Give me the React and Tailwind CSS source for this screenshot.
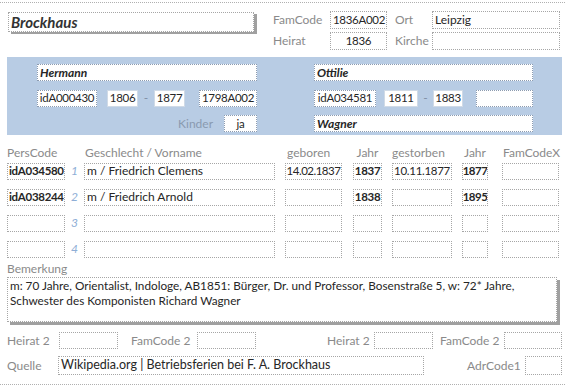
const FONT = { fontFamily: "Lato, 'Open Sans', sans-serif" };

function Box({ className = "", children }) {
  return (
    <div
      className={`h-[17px] shrink-0 border border-dotted border-[#a6a6a6] bg-white flex items-center px-[2px] text-[11.5px] tracking-[-0.3px] leading-none text-[#262626] whitespace-nowrap overflow-hidden ${className}`}
    >
      {children}
    </div>
  );
}

function PanelBox({ className = "", solid, children }) {
  return (
    <div
      className={`h-[17px] shrink-0 border bg-white flex items-center px-[2px] text-[11.5px] tracking-[-0.3px] leading-none text-[#262626] whitespace-nowrap overflow-hidden ${
        solid ? "border-solid border-[#d0dae6]" : "border-dotted border-[#8c9bb0]"
      } ${className}`}
    >
      {children}
    </div>
  );
}

function Label({ className = "", children }) {
  return (
    <div className={`shrink-0 text-[12px] leading-none text-[#8a8a8a] whitespace-nowrap ${className}`}>
      {children}
    </div>
  );
}

const rows = [
  { code: "idA034580", name: "m / Friedrich Clemens", geb: "14.02.1837", j1: "1837", gest: "10.11.1877", j2: "1877" },
  { code: "idA038244", name: "m / Friedrich Arnold", geb: "", j1: "1838", gest: "", j2: "1895" },
  { code: "", name: "", geb: "", j1: "", gest: "", j2: "" },
  { code: "", name: "", geb: "", j1: "", gest: "", j2: "" },
];

export default function App() {
  return (
    <div className="w-[570px] h-[390px] bg-white overflow-hidden" style={FONT}>
      {/* top rule */}
      <div className="mt-[2px] w-[565px] border-t border-dotted border-[#b0b0b0]" />

      {/* header */}
      <div className="h-[54px] flex items-start pt-[8px]">
        <div className="ml-[8px] mt-[1px] w-[246px] h-[20px] border border-dotted border-[#a6a6a6] bg-white shadow-[3px_2px_0_#a0a0a0] flex items-center px-[2px]">
          <span className="text-[15px] font-bold italic text-[#333]">Brockhaus</span>
        </div>
        <div className="ml-[19px] flex flex-col gap-[3px]">
          <div className="flex items-center h-[18px]">
            <Label className="w-[57px]">FamCode</Label>
            <Box className="w-[57px] !h-[18px]">1836A002</Box>
            <Label className="w-[37px] ml-[8px]">Ort</Label>
            <Box className="w-[128px] !h-[18px] !text-[12px] !tracking-normal">Leipzig</Box>
          </div>
          <div className="flex items-center h-[18px]">
            <Label className="w-[57px]">Heirat</Label>
            <Box className="w-[57px] !h-[18px] justify-center">1836</Box>
            <Label className="w-[37px] ml-[8px]">Kirche</Label>
            <Box className="w-[128px] !h-[18px]" />
          </div>
        </div>
      </div>

      {/* parents panel */}
      <div className="ml-[7px] w-[555px] h-[78px] bg-[#b8cce4] flex pt-[7px]">
        <div className="ml-[30px] w-[220px] flex flex-col gap-[8px]">
          <PanelBox className="w-full font-bold italic !text-[12px] !tracking-normal">Hermann</PanelBox>
          <div className="flex items-center">
            <PanelBox className="w-[60px] justify-center">idA000430</PanelBox>
            <PanelBox solid className="w-[31px] ml-[10px] justify-center">1806</PanelBox>
            <div className="w-[16px] text-center text-[12px] text-[#7f8fa6]">-</div>
            <PanelBox solid className="w-[31px] justify-center">1877</PanelBox>
            <PanelBox className="w-[58px] ml-[14px] justify-center">1798A002</PanelBox>
          </div>
          <div className="flex items-center justify-end">
            <Label className="text-[#8a9ab0]">Kinder</Label>
            <PanelBox className="w-[33px] ml-[11px] justify-center">ja</PanelBox>
          </div>
        </div>
        <div className="ml-[57px] w-[219px] flex flex-col gap-[8px]">
          <PanelBox className="w-full font-bold italic !text-[12px] !tracking-normal">Ottilie</PanelBox>
          <div className="flex items-center">
            <PanelBox className="w-[62px] justify-center">idA034581</PanelBox>
            <PanelBox solid className="w-[34px] ml-[8px] justify-center">1811</PanelBox>
            <div className="w-[15px] text-center text-[12px] text-[#7f8fa6]">-</div>
            <PanelBox solid className="w-[30px] justify-center">1883</PanelBox>
            <PanelBox className="w-[57px] ml-[13px]" />
          </div>
          <PanelBox className="w-full font-bold italic !text-[12px] !tracking-normal">Wagner</PanelBox>
        </div>
      </div>

      {/* children table */}
      <div className="ml-[7px] mt-[8px] flex items-center h-[19px]">
        <Label className="w-[58px]">PersCode</Label>
        <div className="w-[19px]" />
        <Label className="w-[191px] pl-[1px]">Geschlecht / Vorname</Label>
        <Label className="w-[57px] ml-[10px] pl-[2px]">geboren</Label>
        <Label className="w-[29px] ml-[11px] text-center">Jahr</Label>
        <Label className="w-[60px] ml-[10px]">gestorben</Label>
        <Label className="w-[26px] ml-[10px] text-center">Jahr</Label>
        <Label className="w-[57px] ml-[14px] pl-[1px]">FamCodeX</Label>
      </div>
      <div className="ml-[7px] flex flex-col gap-[8px]">
        {rows.map((r, i) => (
          <div key={i} className="flex items-center">
            <Box className="w-[58px] font-bold !px-[1px]">{r.code}</Box>
            <div className="w-[19px] text-center text-[12px] italic text-[#8eaed6]">{i + 1}</div>
            <Box className="w-[191px] !text-[12px] !tracking-normal">{r.name}</Box>
            <Box className="w-[57px] ml-[10px] !px-0 justify-center !tracking-[-0.5px]">{r.geb}</Box>
            <Box className="w-[29px] ml-[11px] justify-center font-bold">{r.j1}</Box>
            <Box className="w-[60px] ml-[10px] justify-center">{r.gest}</Box>
            <Box className="w-[26px] ml-[10px] justify-center font-bold !px-0 !tracking-[-0.5px]">{r.j2}</Box>
            <Box className="w-[57px] ml-[14px]" />
          </div>
        ))}
      </div>

      {/* remarks */}
      <div className="ml-[7px] mt-[3px] h-[16px] flex items-center">
        <Label>Bemerkung</Label>
      </div>
      <div className="ml-[7px] w-[550px] h-[45px] border border-dotted border-[#a6a6a6] bg-white shadow-[3px_3px_0_#a0a0a0] px-[2px] text-[11.75px] leading-[15px] text-[#262626]">
        m: 70 Jahre, Orientalist, Indologe, AB1851: Bürger, Dr. und Professor, Bosenstraße 5, w: 72* Jahre,
        <br />
        Schwester des Komponisten Richard Wagner
      </div>

      {/* second marriage */}
      <div className="ml-[7px] mt-[10px] flex items-center">
        <Label className="w-[52px]">Heirat 2</Label>
        <Box className="w-[59px]" />
        <Label className="w-[66px] ml-[13px]">FamCode 2</Label>
        <Box className="w-[59px]" />
        <Label className="w-[47px] ml-[71px]">Heirat 2</Label>
        <Box className="w-[59px]" />
        <Label className="w-[64px] ml-[7px]">FamCode 2</Label>
        <Box className="w-[58px]" />
      </div>

      {/* source */}
      <div className="ml-[7px] mt-[7px] flex items-center">
        <Label className="w-[51px]">Quelle</Label>
        <Box className="w-[366px] !h-[19px] !text-[12.5px] !tracking-normal">
          Wikipedia.org | Betriebsferien bei F. A. Brockhaus
        </Box>
        <Label className="w-[58px] ml-[43px]">AdrCode1</Label>
        <Box className="w-[37px] !h-[19px]" />
      </div>

      <div className="mt-[9px] w-[565px] border-t border-dotted border-[#b0b0b0]" />
    </div>
  );
}
